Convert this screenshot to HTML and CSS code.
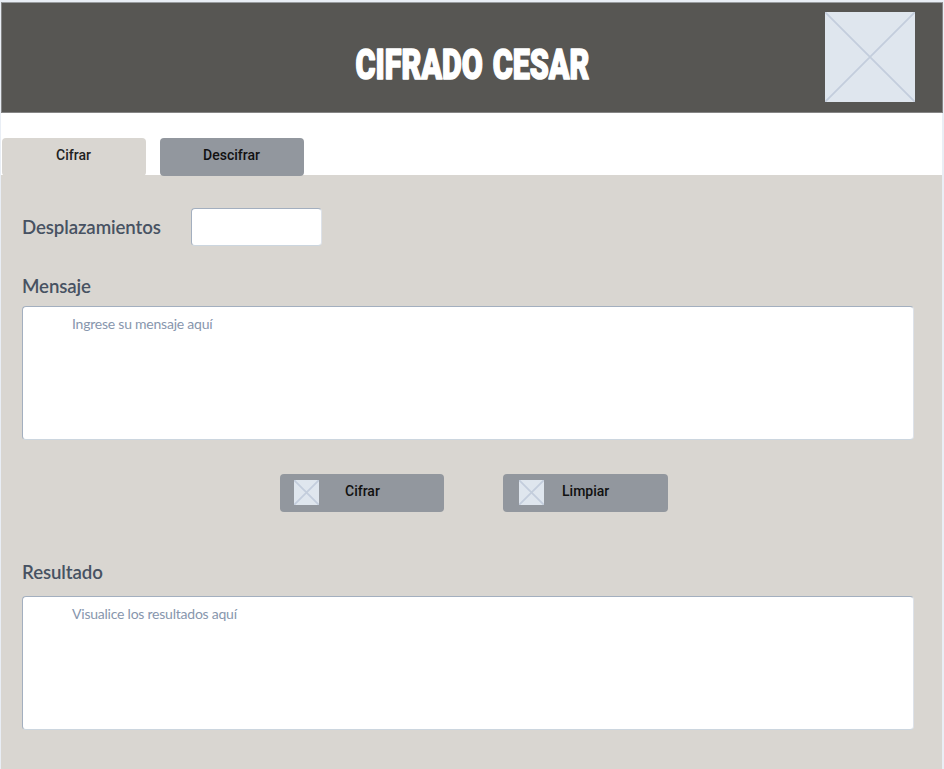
FILE: index.html
```html
<!DOCTYPE html>
<html lang="es">
<head>
<meta charset="utf-8">
<title>Cifrado Cesar</title>
<link rel="stylesheet" href="styles.css">
</head>
<body>
<div class="page">
  <header class="header">
    <svg class="title" role="heading" aria-level="1" width="238" height="40" viewBox="0 0 238 40">
      <text x="2.5" y="34.5" textLength="234" lengthAdjust="spacingAndGlyphs">CIFRADO CESAR</text>
    </svg>
    <svg class="logo" viewBox="0 0 90 90"><path d="M0 0L90 90M90 0L0 90"/></svg>
  </header>
  <nav class="tabs">
    <button class="tab active">Cifrar</button>
    <button class="tab">Descifrar</button>
  </nav>
  <main class="panel">
    <div class="shift">
      <label for="shift">Desplazamientos</label>
      <input id="shift" class="field">
    </div>
    <label class="message-label" for="message">Mensaje</label>
    <textarea id="message" class="field area" placeholder="Ingrese su mensaje aquí"></textarea>
    <div class="actions">
      <button class="action"><svg class="icon" viewBox="0 0 25 25"><path d="M0 0L25 25M25 0L0 25"/></svg><span>Cifrar</span></button>
      <button class="action clear"><svg class="icon" viewBox="0 0 25 25"><path d="M0 0L25 25M25 0L0 25"/></svg><span>Limpiar</span></button>
    </div>
    <label class="result-label" for="result">Resultado</label>
    <textarea id="result" class="field area" placeholder="Visualice los resultados aquí"></textarea>
  </main>
</div>
</body>
</html>
```
FILE: styles.css
```css
* { box-sizing: border-box; }
body {
  margin: 0;
  height: 769px;
  overflow: hidden;
  padding: 2px 1px 0;
  background: #e9eef5;
  font-family: Lato, sans-serif;
}
.page {
  height: 767px;
  display: flex;
  flex-direction: column;
  background: linear-gradient(to right, #fff 941px, #e9eef5 941px);
}
.header {
  height: 111px;
  flex: none;
  display: grid;
  grid-template-columns: 1fr 238px 1fr;
  align-items: start;
  background: #575653;
  border: 1px solid #858585;
  border-top-color: #999c9f;
}
.title { grid-column: 2; margin-top: 41px; overflow: visible; }
.title text {
  font: 900 42.5px Roboto, sans-serif;
  word-spacing: 3px;
  fill: #fff;
  stroke: #fff;
  stroke-width: 1.6;
  stroke-linejoin: round;
}
.logo {
  width: 90px;
  height: 90px;
  margin: 9px 27px 0 0;
  justify-self: end;
}
.logo, .icon {
  background: #dfe6ee;
  fill: none;
  stroke: #c3cddc;
  stroke-width: 1.7;
}
.tabs {
  height: 62px;
  flex: none;
  display: flex;
  gap: 14px;
  padding: 25px 0 0 1px;
}
.tab, .action {
  height: 38px;
  border: 0;
  border-radius: 4px;
  background: #92979e;
  color: #111;
  font: 500 14px/16px Roboto, sans-serif;
}
.tab { width: 144px; padding: 0 1px 4px 0; position: relative; }
.tab.active { background: #d9d6d1; color: #222; }
.panel {
  flex: 1;
  width: 941px;
  padding: 33px 28px 0 21px;
  display: flex;
  flex-direction: column;
  background: #d9d6d1;
}
label {
  color: #475262;
  font-size: 18.67px;
  font-weight: 600;
  line-height: 24px;
  letter-spacing: -0.1px;
}
.shift {
  height: 38px;
  display: flex;
  align-items: center;
  justify-content: space-between;
  width: 300px;
}
.field {
  border: 1px solid #a3afbf;
  border-right-color: #dde2e9;
  border-bottom-color: #ccd6df;
  border-radius: 4px;
  background: #fff;
  resize: none;
}
.shift .field { width: 131px; height: 38px; }
.message-label { margin-top: 28px; }
.area {
  display: block;
  width: 892px;
  height: 134px;
  margin-top: 8px;
  padding: 8px 49px;
  font: 14px/17px Lato, sans-serif;
  letter-spacing: -0.23px;
}
.area::placeholder { color: #8796ad; opacity: 1; }
.actions {
  display: flex;
  gap: 59px;
  margin: 34px 0 0 258px;
}
.action {
  width: 164px;
  display: flex;
  align-items: center;
  padding: 0 0 1px 14px;
}
.action .icon { width: 25px; height: 25px; margin-right: 26px; }
.action span { margin-top: -3px; }
.action.clear { width: 165px; padding-left: 16px; }
.action.clear .icon { margin-right: 18px; }
.result-label { margin-top: 48px; }
.result-label + .area { margin-top: 12px; }
```
